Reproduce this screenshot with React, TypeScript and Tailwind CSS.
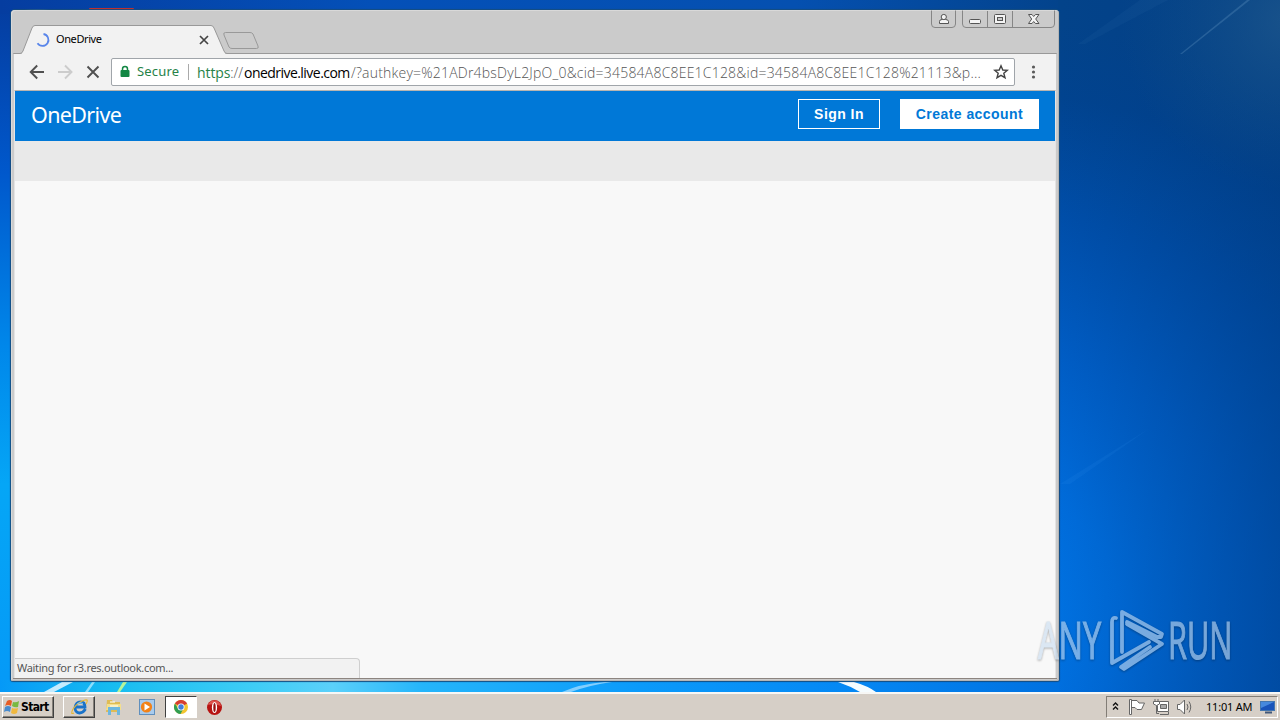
import type { ReactNode } from "react"

function Wallpaper() {
  return (
    <svg className="absolute inset-0" width="1280" height="692" viewBox="0 0 1280 692" preserveAspectRatio="none">
      <defs>
        <linearGradient id="left" x1="0" y1="0" x2="0" y2="1">
          <stop offset="0" stopColor="#053c9e" />
          <stop offset="0.25" stopColor="#0058cc" />
          <stop offset="0.5" stopColor="#0087ea" />
          <stop offset="0.7" stopColor="#05a6f6" />
          <stop offset="1" stopColor="#0599f7" />
        </linearGradient>
        <linearGradient id="top" gradientUnits="userSpaceOnUse" x1="0" y1="0" x2="1060" y2="0">
          <stop offset="0" stopColor="#053da0" />
          <stop offset="0.35" stopColor="#0450b8" />
          <stop offset="0.75" stopColor="#0550b0" />
          <stop offset="1" stopColor="#03438c" />
        </linearGradient>
        <radialGradient id="right" gradientUnits="userSpaceOnUse" cx="990" cy="620" r="600">
          <stop offset="0" stopColor="#0076e6" />
          <stop offset="0.22" stopColor="#006cdb" />
          <stop offset="0.45" stopColor="#005dc5" />
          <stop offset="0.68" stopColor="#004ea9" />
          <stop offset="0.88" stopColor="#01438f" />
          <stop offset="1" stopColor="#03438a" />
        </radialGradient>
        <radialGradient id="corner" gradientUnits="userSpaceOnUse" cx="1290" cy="20" r="170">
          <stop offset="0" stopColor="#3a6f92" stopOpacity="0.4" />
          <stop offset="1" stopColor="#205a88" stopOpacity="0" />
        </radialGradient>
        <linearGradient id="shade" x1="0" y1="0" x2="1" y2="0">
          <stop offset="0" stopColor="#003a80" stopOpacity="0" />
          <stop offset="1" stopColor="#003a80" stopOpacity="0.45" />
        </linearGradient>
        <linearGradient id="bottom" gradientUnits="userSpaceOnUse" x1="0" y1="0" x2="1280" y2="0">
          <stop offset="0" stopColor="#0599f7" />
          <stop offset="0.09" stopColor="#18bdf0" />
          <stop offset="0.2" stopColor="#3fcdf6" />
          <stop offset="0.26" stopColor="#5bd0fa" />
          <stop offset="0.33" stopColor="#25b5fa" />
          <stop offset="0.5" stopColor="#0b9afa" />
          <stop offset="0.66" stopColor="#0588f4" />
          <stop offset="0.83" stopColor="#0070df" />
        </linearGradient>
      </defs>
      <rect width="1059" height="692" fill="url(#left)" />
      <rect width="1060" height="14" fill="url(#top)" />
      <rect x="1058" width="222" height="692" fill="url(#right)" />
      <rect x="1058" width="222" height="692" fill="url(#shade)" />
      <rect x="1110" width="170" height="190" fill="url(#corner)" />
      <path d="M1180 54 L1247 0 h3 L1182 54Z" fill="#5d8fbd" opacity="0.35" />
      <path d="M1078 44 L1140 0 h28 L1085 44Z" fill="#3d78b2" opacity="0.1" />
      <path d="M1060 484 L1150 428 L1070 484Z" fill="#3b9cf5" opacity="0.1" />
      <rect y="680" width="1059" height="12" fill="url(#bottom)" />
      <path d="M44 692 L62 682 H73 L54 692Z" fill="#e4f7ff" opacity="0.85" />
      <path d="M85 692 L92 682 h3 L88 692Z" fill="#c0efff" opacity="0.7" />
      <path d="M117 692 L123 682 h4 L120 692Z" fill="#b5f59b" />
      <path d="M562 692 Q580 684 604 682 H612 Q590 685 571 692Z" fill="#b5e3ff" opacity="0.7" />
      <path d="M838 682 H854 Q868 686 876 692 H860 Q850 686 838 682Z" fill="#f5fcff" />
      {/* tops of the desktop icons behind the window */}
      <rect x="89" y="8" width="45" height="5" rx="1" fill="#d42f25" />
      <path d="M24 10 q13 -2 26 0z" fill="#9fb5d8" />
    </svg>
  )
}

function Caption() {
  return (
    <svg className="absolute right-0 top-0" width="130" height="20" viewBox="929 10 130 20" fill="none">
      <path d="M931.5 10.5 V24 Q931.5 27.5 935 27.5 H952 Q955.5 27.5 955.5 24 V10.5" stroke="#868686" />
      <path d="M962.5 10.5 V24 Q962.5 27.5 966 27.5 H1051 Q1054.5 27.5 1054.5 24 V10.5 M987.5 11 V27 M1012.5 11 V27" stroke="#868686" />
      <g stroke="#555" fill="#f4f4f4">
        <path d="M939.5 23.5 V21.5 Q939.5 19.5 942 19.5 H945.500 Q948.5 19.5 948.5 21.5 V23.5Z" />
        <circle cx="943.8" cy="17" r="2.600" />
        <rect x="969.5" y="19.5" width="11" height="4" rx="1" />
        <rect x="994.5" y="14.5" width="11" height="9" rx="1" />
        <rect x="997.5" y="17.5" width="5" height="3" fill="#ccc" />
        <path d="M1028.5 14.5 H1032 L1033.7 16.5 L1035.5 14.5 H1039 L1035.7 19 L1039 23.5 H1035.5 L1033.7 21.5 L1032 23.5 H1028.5 L1031.7 19Z" />
      </g>
    </svg>
  )
}

function TabStrip() {
  return (
    <div className="relative h-[44px]">
      <svg className="absolute left-0 top-0" width="1048" height="44" viewBox="11 10 1048 44">
        <path d="M13.5 54 V53.5 H20 Q22 53.5 23 51 L32 28 Q33 25.5 35 25.5 H211 Q213 25.5 214 28 L224 51 Q225 53.5 227 53.5 H1056.5 V54Z" fill="#f2f2f2" stroke="#999" />
        <path d="M22 53.5 H225" stroke="#f2f2f2" />
        <path d="M225.5 32.5 H250 Q252 32.5 253 34 L258 46 Q259 48.500 256.500 48.5 H232 Q230 48.5 229 47 L224 35 Q223 32.5 225.5 32.5Z" fill="#cbcbcb" stroke="#999" />
        <path d="M43.500 34 A6 6 0 1 1 37.500 43.300" fill="none" stroke="#5a86ea" strokeWidth="1.800" />
        <path d="M200 36 L208 44 M208 36 L200 44" stroke="#444" strokeWidth="1.700" />
      </svg>
      <span className="absolute left-[45px] top-[21px] text-[11px] leading-4 tracking-[-0.400px] text-black">OneDrive</span>
      <Caption />
    </div>
  )
}

function Toolbar() {
  return (
    <div className="mx-[3px] flex h-[36px] items-center bg-[#f2f2f2]">
      <svg width="97" height="36" viewBox="14 54 97 36" fill="none" strokeWidth="1.900">
        <path d="M44 72 H31 M37.200 65.500 L30.700 72 L37.200 78.500" stroke="#505050" />
        <path d="M58 72 H71 M65 65.500 L71.500 72 L65 78.500" stroke="#ccc" />
        <path d="M87.500 66.500 L98.500 77.500 M98.500 66.500 L87.500 77.500" stroke="#505050" />
      </svg>
      <div className="flex h-[28px] w-[904px] items-center rounded-[2px] border border-[#a0a5aa] bg-white pl-[8px] text-[14px]">
        <svg width="10" height="14" viewBox="0 0 10 14">
          <path d="M2.500 6 V4 a2.500 2.500 0 0 1 5 0 V6" fill="none" stroke="#138744" strokeWidth="1.500" />
          <rect x="0.500" y="5" width="9" height="7" rx="1" fill="#138744" />
        </svg>
        <span className="ml-[7px] w-[44px] whitespace-nowrap text-[13px] tracking-[0.2px] text-[#268248]">Secure</span>
        <span className="ml-[7px] mr-[8px] h-[16px] w-px bg-[#aaa]" />
        <span className="w-[784px] whitespace-nowrap font-['Open_Sans'] text-[14px] font-light text-[#555]">
          <span className="inline-block w-[47px] tracking-[-0.1px]"><span className="font-normal text-[#268248]">https</span>://</span>
          <span className="inline-block w-[107px] font-normal tracking-[-0.540px] text-black">onedrive.live.com</span>
          <span className="tracking-[0.210px]">/?authkey=%21ADr4bsDyL2JpO_0&amp;cid=34584A8C8EE1C128&amp;id=34584A8C8EE1C128%21113&amp;p...</span>
        </span>
        <svg className="ml-[12px] shrink-0" width="16" height="16" viewBox="0 0 16 16">
          <path d="M8 1.800 L9.800 6 L14.300 6.300 L10.800 9.200 L12 13.700 L8 11.300 L4 13.700 L5.200 9.200 L1.700 6.300 L6.200 6Z" fill="none" stroke="#444" strokeWidth="1.400" />
        </svg>
      </div>
      <svg className="ml-[14px]" width="9" height="16" viewBox="0 0 9 16" fill="#5a5a5a">
        <circle cx="4.500" cy="3" r="1.600" />
        <circle cx="4.500" cy="8" r="1.600" />
        <circle cx="4.500" cy="13" r="1.600" />
      </svg>
    </div>
  )
}

function BrowserWindow() {
  return (
    <div className="absolute left-[11px] top-[10px] flex h-[671px] w-[1048px] flex-col rounded-t-[4px] rounded-b-[2px] bg-[#cbcbcb] shadow-[inset_1px_1px_0_#d9d9d9,inset_-1px_-1px_0_#b5b5b5,0_0_1px_1px_#164d80]">
      <TabStrip />
      <Toolbar />
      <div className="mx-[3px] flex h-[588px] flex-col border-x border-t border-[#b9b5b0] border-x-[#e4e4e4] bg-[#f8f8f8]">
        <div className="flex h-[50px] shrink-0 items-start bg-[#0078d7] pl-4 pr-4 pt-2">
          <div className="font-['Noto_Sans'] text-[21.5px] leading-[32px] tracking-[-0.65px] text-white">OneDrive</div>
          <div className="ml-auto flex gap-5 font-['Liberation_Sans'] text-[14px] font-bold tracking-[0.450px]">
            <button className="h-[30px] w-[82px] border border-white pt-px text-white">Sign In</button>
            <button className="h-[30px] w-[139px] bg-white pt-px text-[#0078d7]">Create account</button>
          </div>
        </div>
        <div className="h-[40px] shrink-0 bg-[#e9e9e9]" />
        <div className="mt-auto flex h-[20px] w-[345px] items-center rounded-tr-[4px] border-r border-t border-[#cfcfcf] bg-[#f2f2f2] pl-[2px] text-[11px] text-[#555]">
          <span className="tracking-[-0.3px]">Waiting for r3.res.outlook.com...</span>
        </div>
      </div>
      <div className="mx-[2px] h-px bg-[#8d8580]" />
    </div>
  )
}

function Watermark() {
  return (
    <div className="absolute left-[1037px] top-[604px] h-[72px] w-[200px] opacity-60 drop-shadow-[0_1px_1px_rgba(0,0,0,0.5)]">
      <svg width="200" height="72" viewBox="1037 604 200 72">
        <g fill="#c8dcf0" stroke="#c8dcf0" strokeWidth="1.200" fontFamily="'Open Sans', sans-serif" fontSize="51">
          <text x="0" y="0" transform="translate(1038 659) scale(0.62 1)" textLength="102" lengthAdjust="spacingAndGlyphs">ANY</text>
          <text x="0" y="0" transform="translate(1168 659) scale(0.62 1)" textLength="104" lengthAdjust="spacingAndGlyphs">RUN</text>
        </g>
        <g fill="none" stroke="#c8dcf0" strokeWidth="3.800" strokeLinejoin="round" strokeLinecap="round">
          <path d="M1116 618 Q1112 617 1112 622 V663 L1149 642" />
          <path d="M1122 652 V612 L1162 634 L1161 637 L1157 637 L1127 622" />
          <path d="M1127 624 L1162 644 L1124 669 L1121 667 L1150 647" />
        </g>
      </svg>
    </div>
  )
}

type TaskButtonProps = {
  className: string
  children: ReactNode
}

function TaskButton({ className, children }: TaskButtonProps) {
  return <div className={"flex h-[22px] w-[32px] items-center justify-center " + className}>{children}</div>
}

function Taskbar() {
  return (
    <div className="flex h-[28px] items-center border-t-2 border-[#f7f7f5] bg-[#d6cfc7] pl-[2px] text-[11px] text-black">
      <div className="flex h-[22px] w-[52px] items-center border border-b-[#404040] border-l-white border-r-[#404040] border-t-white shadow-[inset_-1px_-1px_0_#858079]">
        <svg className="ml-px" width="17" height="17" viewBox="0 0 17 17">
          <path d="M3 2 Q6 0 8 2 L7 7 Q4 5 1 7Z" fill="#e65c25" />
          <path d="M9 3 Q12 4 15 2 L14 8 Q11 9 8 7Z" fill="#78b943" />
          <path d="M1 8 Q4 6 7 8 L6 13 Q3 11 0 13Z" fill="#488bce" />
          <path d="M8 9 Q11 10 14 9 L13 14 Q10 16 7 14Z" fill="#f0b83f" />
        </svg>
        <span className="font-['DejaVu_Sans_Condensed','DejaVu_Sans'] text-[12px] font-bold tracking-[-0.65px]">Start</span>
      </div>
      <TaskButton className="ml-[9px] border border-b-[#404040] border-l-white border-r-[#404040] border-t-white shadow-[inset_-1px_-1px_0_#858079]">
        <svg width="19" height="18" viewBox="0 0 19 18" fill="none">
          <path d="M15.500 11 Q13 15 9.500 15 Q5 14.500 5 9.500 Q6 4 10.500 4 Q15 4 15 9 H6" stroke="#1a73c9" strokeWidth="2.800" />
          <path d="M4 15 Q0 17 3 11 Q8 4 15 2 Q19 1 16 6" stroke="#e8b732" strokeWidth="1.200" />
          <path d="M7 6 Q10 3.500 13 5.500" stroke="#80c9f5" />
        </svg>
      </TaskButton>
      <TaskButton className="ml-[2px]">
        <svg width="17" height="18" viewBox="0 0 17 18">
          <path d="M2 2 H7 L8 4 H15 V14 H1Z" fill="#dfbc55" />
          <path d="M2 6 H16 V12 H1Z" fill="#f3df8d" />
          <path d="M3 17 V9 H15 V17 H12 V12 H6 V17Z" fill="#6eb7df" />
          <path d="M5 4 H10 M5 8 H13" stroke="#fff" />
        </svg>
      </TaskButton>
      <TaskButton className="ml-[2px]">
        <svg width="16" height="16" viewBox="0 0 16 16">
          <rect x="0.500" y="0.500" width="15" height="15" fill="#a8cbed" stroke="#608fbd" />
          <circle cx="7.500" cy="8" r="5.600" fill="#f28218" />
          <path d="M5.500 4.500 L11 8 L5.500 11.500Z" fill="#fff" />
        </svg>
      </TaskButton>
      <TaskButton className="ml-[2px] border border-b-white border-l-[#404040] border-r-white border-t-[#404040] bg-white">
        <svg width="16" height="16" viewBox="0 0 16 16">
          <circle cx="8" cy="8" r="7" fill="#f3c530" />
          <path d="M8 8 L1.900 4.500 A7 7 0 0 1 14.100 4.500Z" fill="#d63e32" />
          <path d="M1.900 4.500 A7 7 0 0 0 7.500 15 L10.500 9.500 L5 9.500Z" fill="#319e52" />
          <circle cx="8" cy="8" r="3.500" fill="#fff" />
          <circle cx="8" cy="8" r="2.700" fill="#437fdb" />
        </svg>
      </TaskButton>
      <TaskButton className="ml-px">
        <svg width="17" height="17" viewBox="0 0 17 17">
          <circle cx="8.500" cy="8.500" r="7.500" fill="#b71412" />
          <path d="M2 6 Q4 1 9 1.500 Q14 2 15 7 Q8 4 2 6Z" fill="#dd534d" />
          <ellipse cx="8.500" cy="8.500" rx="2.600" ry="5.500" fill="#fff" />
          <ellipse cx="8.500" cy="8.500" rx="1.200" ry="4.500" fill="#971010" />
        </svg>
      </TaskButton>
      <div className="ml-auto mr-[2px] flex h-[22px] w-[172px] items-center border border-b-white border-l-[#827d76] border-r-white border-t-[#827d76]">
        <svg width="97" height="20" viewBox="1107 697 97 20" fill="none">
          <path d="M1113 705.500 L1115.500 703 L1118 705.500 M1113 709.500 L1115.500 707 L1118 709.500" stroke="#111" strokeWidth="1.400" />
          <g stroke="#666" fill="#fff">
            <path d="M1129.500 699.500 H1131.500 V714.500 H1129.500Z M1131.500 700.500 H1137 L1139 703 H1144.500 L1141.500 709.500 H1137 L1135 707.500 H1131.500Z" />
            <path d="M1157.500 701.500 H1168.500 V711.500 H1157.500Z" />
            <path d="M1160.500 704.500 H1166.500 V708.500 H1160.500Z" fill="#aaa" />
            <path d="M1160 714.500 H1168.500 V712 M1156.500 705 V713.500 H1159" fill="none" />
            <path d="M1153.500 701.500 H1159.500 V704 Q1156.500 707 1153.500 704Z M1155 699 V702 M1158 699 V702" />
            <path d="M1177.500 704.500 H1180 L1184.500 700 V714 L1180 709.500 H1177.500Z" />
            <path d="M1187 704 Q1189 707 1187 710 M1189 701.500 Q1192.500 707 1189 712.500" fill="none" />
          </g>
        </svg>
        <span className="ml-[2px] w-[49px] whitespace-nowrap tracking-[-0.2px]">11:01 AM</span>
        <svg className="ml-[5px]" width="16" height="16" viewBox="0 0 16 16">
          <rect x="0.500" y="2.500" width="14" height="9" fill="#1953ba" stroke="#4476af" />
          <path d="M1 3 H14 L1 9Z" fill="#4688dd" />
          <path d="M5 13.500 H12" stroke="#42597a" strokeWidth="2" />
        </svg>
      </div>
    </div>
  )
}

export default function App() {
  return (
    <div className="flex h-[720px] w-[1280px] flex-col overflow-hidden font-['Noto_Sans','DejaVu_Sans',sans-serif]">
      <div className="relative h-[692px] overflow-hidden">
        <Wallpaper />
        <BrowserWindow />
        <Watermark />
      </div>
      <Taskbar />
    </div>
  )
}
